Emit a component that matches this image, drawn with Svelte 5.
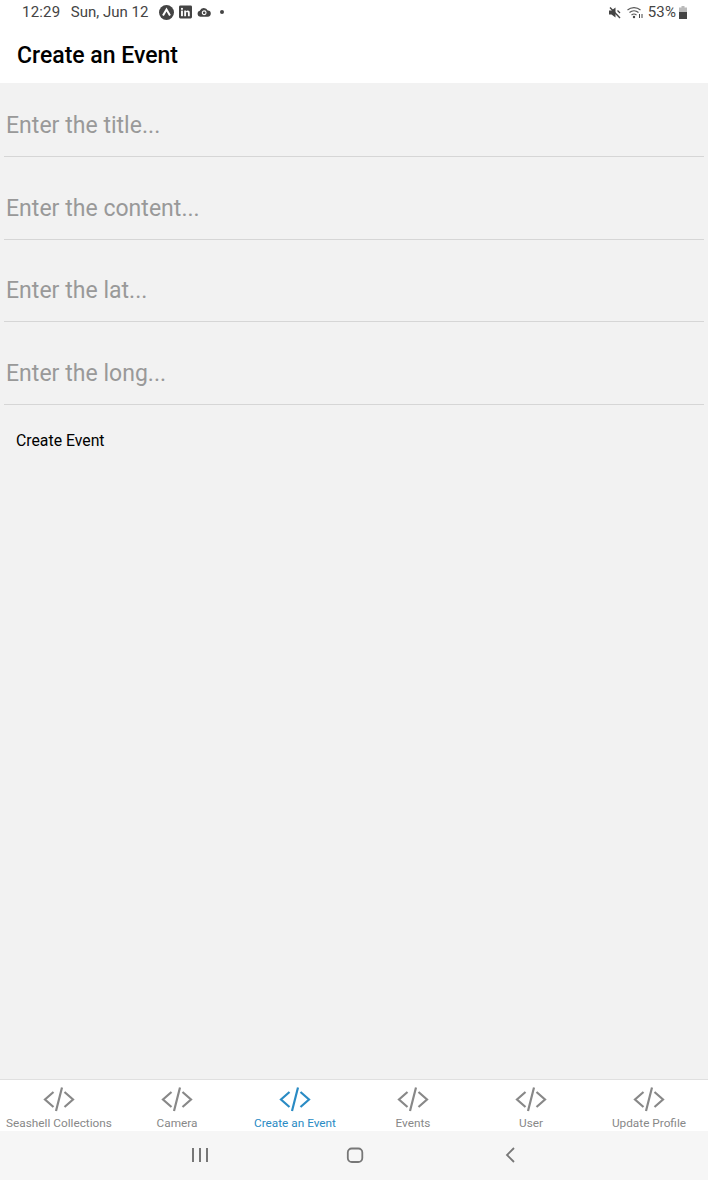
<script>
  const fields = ['Enter the title...', 'Enter the content...', 'Enter the lat...', 'Enter the long...'];
  const tabs = [
    { label: 'Seashell Collections' },
    { label: 'Camera' },
    { label: 'Create an Event', active: true },
    { label: 'Events' },
    { label: 'User' },
    { label: 'Update Profile' }
  ];
</script>

<div class="screen">
  <div class="status">
    <div class="status-left">
      <span class="time">12:29</span>
      <span class="date">Sun, Jun 12</span>
      <svg class="ic-a" width="15" height="15" viewBox="0 0 15 15">
        <circle cx="7.5" cy="7.5" r="7.5" fill="#444" />
        <path d="M4 10.5 7.5 4.5 11 10.5" fill="none" stroke="#fff" stroke-width="2" />
      </svg>
      <svg class="ic-in" width="13" height="14" viewBox="0 0 14 14">
        <rect width="14" height="14" rx="1.5" fill="#444" />
        <rect x="2.2" y="5.5" width="2" height="6" fill="#fff" />
        <rect x="2.2" y="2.6" width="2" height="2" fill="#fff" />
        <path d="M5.6 5.5h1.9v.9c.4-.7 1.1-1 1.9-1 1.500 0 2.200.9 2.200 2.500v3.600h-2V8.300c0-.8-.3-1.200-.9-1.200-.7 0-1.100.5-1.100 1.300v3.100h-2z" fill="#fff" />
      </svg>
      <svg class="ic-cloud" width="14" height="10" viewBox="0 0 15 10">
        <path d="M3.500 10A3.200 3.200 0 0 1 3 3.700 4.600 4.600 0 0 1 11.500 3.400 3.300 3.300 0 0 1 11.500 10z" fill="#444" />
        <circle cx="7.700" cy="5.800" r="2" fill="none" stroke="#fff" stroke-width="1.200" />
      </svg>
      <span class="dot"></span>
    </div>
    <div class="status-right">
      <svg class="ic-mute" width="13" height="13" viewBox="0 0 13 13">
        <path d="M1 4.500h2.500L7.500 1.500v10L3.500 8.500H1z" fill="#444" />
        <path d="M2 1.500 12 12" stroke="#444" stroke-width="1.400" />
        <path d="M9.500 4.500 12 7" stroke="#444" stroke-width="1.200" />
      </svg>
      <svg class="ic-wifi" width="18" height="14" viewBox="0 0 17 14">
        <path d="M1 5a10 10 0 0 1 13 0M3 7.500a7 7 0 0 1 9 0M5 10a4 4 0 0 1 5 0" fill="none" stroke="#555" stroke-width="1.100" />
        <circle cx="7.500" cy="12" r="1.200" fill="#444" />
        <path d="M13 9v4M15.500 9v4" stroke="#444" stroke-width="1" />
      </svg>
      <span class="pct">53%</span>
      <svg class="ic-batt" width="8" height="13" viewBox="0 0 8 13">
        <path d="M2.500 0h3v1.500H8V13H0V1.500h2.500z" fill="#bbb" />
        <rect y="6" width="8" height="7" fill="#444" />
      </svg>
    </div>
  </div>

  <header class="title-bar">Create an Event</header>

  <main class="content">
    {#each fields as f}
      <div class="field"><span class="placeholder">{f}</span></div>
    {/each}
    <div class="submit">Create Event</div>
  </main>

  <nav class="tabs">
    {#each tabs as t}
      <div class="tab" class:active={t.active}>
        <svg class="code" width="34" height="26" viewBox="0 0 34 26">
          <path d="M11.500 6 3 13.500 11.500 21M22.500 6 31 13.500 22.500 21M20 1.500 14 25" fill="none" stroke="currentColor" stroke-width="2.200" />
        </svg>
        <span class="tab-label">{t.label}</span>
      </div>
    {/each}
  </nav>

  <div class="sysnav">
    <svg width="18" height="16" viewBox="0 0 18 16">
      <path d="M2 1v14M9 1v14M16 1v14" stroke="#777" stroke-width="2" fill="none" />
    </svg>
    <svg width="18" height="16" viewBox="0 0 18 16">
      <rect x="1.800" y="1.500" width="14.500" height="13.500" rx="4" fill="none" stroke="#777" stroke-width="1.800" />
    </svg>
    <svg width="18" height="16" viewBox="0 0 18 16">
      <path d="M13 1 6 8l7 7" stroke="#777" stroke-width="1.800" fill="none" />
    </svg>
  </div>
</div>

<style>
  :global(body) {
    margin: 0;
  }
  .screen {
    width: 708px;
    height: 1180px;
    display: flex;
    flex-direction: column;
    background: #f2f2f2;
    font-family: Roboto, "Liberation Sans", sans-serif;
    overflow: hidden;
  }
  .status {
    height: 25px;
    flex: none;
    box-sizing: border-box;
    background: #fff;
    display: flex;
    justify-content: space-between;
    align-items: center;
    padding: 0 21px 1px 22px;
    color: #444;
    font-size: 15px;
  }
  .status-left,
  .status-right {
    display: flex;
    align-items: center;
  }
  .time {
    letter-spacing: 0.2px;
  }
  .date {
    margin-left: 10.500px;
  }
  .ic-a {
    margin-left: 11px;
  }
  .ic-in {
    margin-left: 5px;
  }
  .ic-cloud {
    margin-left: 5px;
  }
  .dot {
    width: 4px;
    height: 4px;
    border-radius: 50%;
    background: #444;
    margin-left: 9px;
  }
  .ic-wifi {
    margin-left: 5px;
  }
  .pct {
    margin-left: 4px;
    letter-spacing: 0.1px;
  }
  .ic-batt {
    margin-left: 3px;
  }
  .title-bar {
    height: 58px;
    flex: none;
    box-sizing: border-box;
    background: #fff;
    padding: 17px 0 0 17px;
    font-size: 23px;
    line-height: 27px;
    font-weight: 500;
    color: #000;
  }
  .content {
    flex: 1;
    min-height: 0;
    display: flex;
    flex-direction: column;
    gap: 8.600px;
    padding: 0 4px;
  }
  .field {
    height: 74px;
    flex: none;
    box-sizing: border-box;
    border-bottom: 1.500px solid #d6d6d6;
    padding: 29px 0 0 2px;
  }
  .placeholder {
    display: block;
    font-size: 23px;
    line-height: 28px;
    letter-spacing: 0.03px;
    color: #999;
  }
  .submit {
    margin: 18px 0 0 12px;
    font-size: 15.800px;
    line-height: 19px;
    color: #000;
  }
  .tabs {
    height: 52px;
    flex: none;
    box-sizing: border-box;
    display: flex;
    background: #fff;
    border-top: 1px solid #e0e0e0;
  }
  .tab {
    flex: 1;
    min-width: 0;
    display: flex;
    flex-direction: column;
    align-items: center;
    padding-top: 6px;
    color: #888;
  }
  .tab.active {
    color: #2a8bc4;
  }
  .tab-label {
    font-size: 11.800px;
    line-height: 14px;
    margin-top: 4px;
    white-space: nowrap;
  }
  .sysnav {
    height: 49px;
    flex: none;
    box-sizing: border-box;
    padding: 0 0 1px 1px;
    background: #f6f6f6;
    display: flex;
    align-items: center;
    justify-content: center;
    gap: 137px;
  }
</style>
